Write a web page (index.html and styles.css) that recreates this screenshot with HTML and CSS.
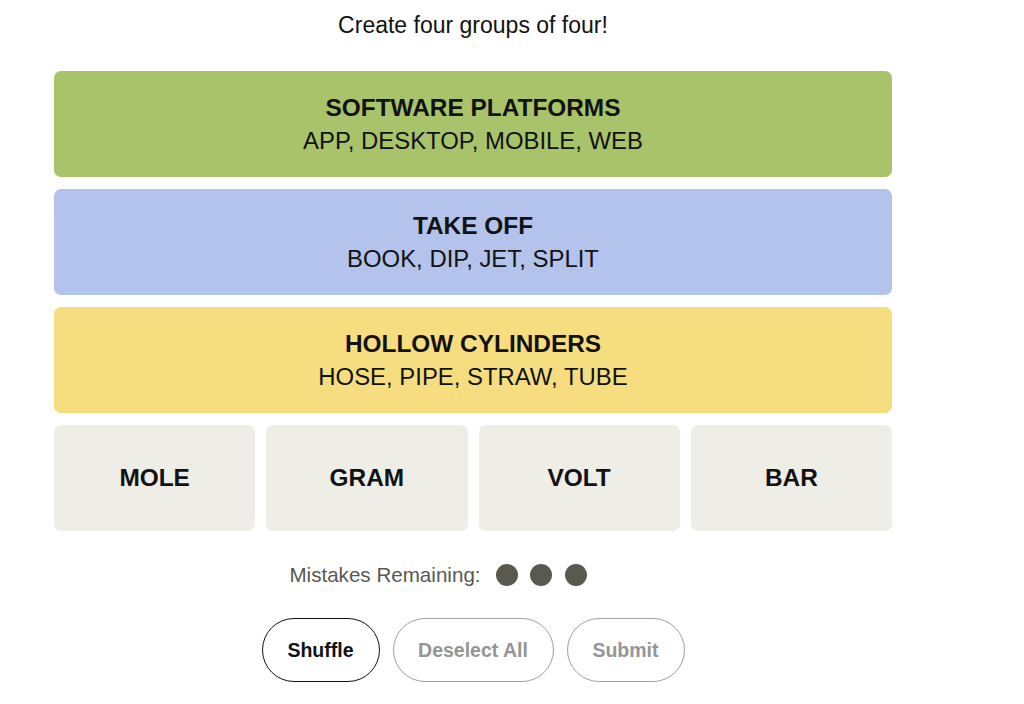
FILE: index.html
```html
<!DOCTYPE html>
<html lang="en">
<head>
<meta charset="utf-8">
<title>Connections</title>
<link rel="stylesheet" href="styles.css">
</head>
<body>
<main class="game">
  <p class="intro">Create four groups of four!</p>
  <section class="board">
    <div class="solved green">
      <h3 class="cat-title">SOFTWARE PLATFORMS</h3>
      <p class="cat-words">APP, DESKTOP, MOBILE, WEB</p>
    </div>
    <div class="solved blue">
      <h3 class="cat-title">TAKE OFF</h3>
      <p class="cat-words">BOOK, DIP, JET, SPLIT</p>
    </div>
    <div class="solved yellow">
      <h3 class="cat-title">HOLLOW CYLINDERS</h3>
      <p class="cat-words">HOSE, PIPE, STRAW, TUBE</p>
    </div>
    <div class="tiles">
      <button class="tile">MOLE</button>
      <button class="tile">GRAM</button>
      <button class="tile">VOLT</button>
      <button class="tile">BAR</button>
    </div>
  </section>
  <div class="mistakes">
    <span class="mistakes-label">Mistakes Remaining:</span>
    <span class="dots">
      <span class="dot"></span>
      <span class="dot"></span>
      <span class="dot"></span>
    </span>
  </div>
  <div class="actions">
    <button class="pill active">Shuffle</button>
    <button class="pill disabled">Deselect All</button>
    <button class="pill disabled">Submit</button>
  </div>
</main>
</body>
</html>
```

FILE: styles.css
```css
* { box-sizing: border-box; }
html, body {
  margin: 0;
  padding: 0;
  background: #ffffff;
  font-family: "Liberation Sans", Arial, sans-serif;
  color: #121212;
}
.game {
  width: 838px;
  margin-left: 54px;
  display: flex;
  flex-direction: column;
}
.intro {
  margin: 0;
  height: 71px;
  padding-top: 11px;
  text-align: center;
  font-size: 23px;
  line-height: 28px;
  color: #121212;
}
.board {
  display: flex;
  flex-direction: column;
  gap: 12px;
}
.solved {
  height: 106px;
  border-radius: 7px;
  display: flex;
  flex-direction: column;
  justify-content: center;
  align-items: center;
}
.green { background: #a8c36a; }
.blue { background: #b3c3eb; }
.yellow { background: #f6de80; }
.cat-title {
  margin: 0;
  font-size: 24.4px;
  line-height: 33px;
  font-weight: 700;
}
.cat-words {
  margin: 0;
  font-size: 23.9px;
  line-height: 33px;
  font-weight: 400;
}
.tiles {
  display: grid;
  grid-template-columns: repeat(4, 1fr);
  gap: 11px;
}
.tile {
  height: 106px;
  border: none;
  border-radius: 7px;
  background: #eeede6;
  font-family: inherit;
  font-size: 24.4px;
  font-weight: 700;
  color: #121212;
  padding: 0;
}
.mistakes {
  margin-top: 32px;
  height: 24px;
  display: flex;
  justify-content: center;
  align-items: center;
  padding-right: 70px;
  gap: 15px;
}
.mistakes-label {
  font-size: 20.6px;
  color: #5a594e;
}
.dots {
  display: flex;
  gap: 12.5px;
}
.dot {
  width: 22px;
  height: 22px;
  border-radius: 50%;
  background: #5a594e;
}
.actions {
  margin-top: 31px;
  display: flex;
  justify-content: center;
  gap: 13px;
}
.pill {
  height: 64px;
  border-radius: 32px;
  background: #fff;
  font-family: inherit;
  font-size: 19.5px;
  font-weight: 700;
  padding: 0;
}
.active {
  width: 118px;
  border: 1.5px solid #121212;
  color: #121212;
}
.disabled {
  border: 1.5px solid #a0a0a0;
  color: #959595;
}
.disabled:nth-child(2) { width: 161px; }
.disabled:nth-child(3) { width: 118px; }
```
